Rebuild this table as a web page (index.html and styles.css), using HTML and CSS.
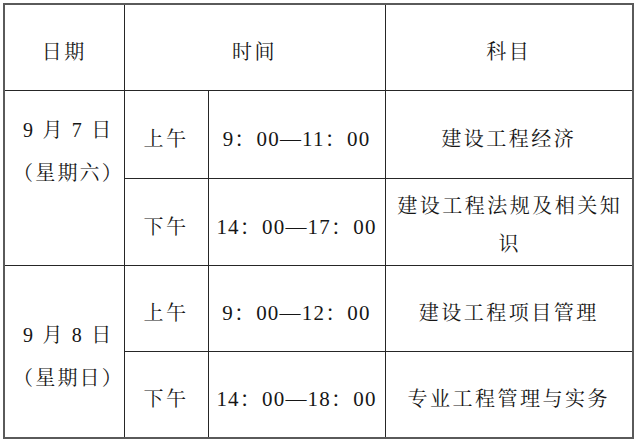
FILE: index.html
```html
<!DOCTYPE html>
<html lang="zh-CN">
<head>
<meta charset="utf-8">
<title>考试时间安排</title>
<link rel="stylesheet" href="styles.css">
</head>
<body>
<table class="schedule">
  <colgroup>
    <col class="c-date">
    <col class="c-half">
    <col class="c-time">
    <col class="c-subject">
  </colgroup>
  <tr class="r-head">
    <th>日期</th>
    <th colspan="2">时间</th>
    <th>科目</th>
  </tr>
  <tr class="r1">
    <td rowspan="2" class="date date-first">9 月 7 日<br>（星期六）</td>
    <td class="half">上午</td>
    <td class="time">9：00—11：00</td>
    <td class="subject">建设工程经济</td>
  </tr>
  <tr class="r2">
    <td class="half">下午</td>
    <td class="time">14：00—17：00</td>
    <td class="subject subject-wrap">建设工程法规及相关知识</td>
  </tr>
  <tr class="r3">
    <td rowspan="2" class="date date-second">9 月 8 日<br>（星期日）</td>
    <td class="half">上午</td>
    <td class="time">9：00—12：00</td>
    <td class="subject">建设工程项目管理</td>
  </tr>
  <tr class="r4">
    <td class="half">下午</td>
    <td class="time">14：00—18：00</td>
    <td class="subject">专业工程管理与实务</td>
  </tr>
</table>
</body>
</html>
```

FILE: styles.css
```css
html, body {
  margin: 0;
  padding: 0;
  background: #ffffff;
}

body {
  font-family: "Liberation Serif", "Noto Serif CJK SC", "Noto Sans CJK SC", serif;
  color: #161616;
}

.schedule {
  margin: 3px 0 0 3px;
  border-collapse: collapse;
  table-layout: fixed;
  width: 629px;
  border: 2px solid #5a5a5a;
}

.c-date { width: 120px; }
.c-half { width: 84px; }
.c-time { width: 177px; }
.c-subject { width: 248px; }

.schedule th,
.schedule td {
  border: 1px solid #262626;
  padding: 10px 0 0 0;
  text-align: center;
  vertical-align: middle;
  font-size: 20px;
  font-weight: normal;
  line-height: 24px;
  letter-spacing: 2.5px;
  white-space: nowrap;
}

.r-head { height: 86px; }
.r1 { height: 88px; }
.r2 { height: 87px; }
.r3 { height: 86px; }
.r4 { height: 87px; }

.schedule .date {
  vertical-align: top;
  line-height: 43px;
  letter-spacing: 2.2px;
  padding-left: 8px;
}

.schedule .date-first { padding-top: 18px; }
.schedule .date-second { padding-top: 48px; }

.schedule .time {
  font-size: 21px;
  letter-spacing: 1.2px;
}

.schedule .subject-wrap {
  white-space: normal;
  line-height: 38px;
  padding: 6px 6px 0 8px;
}
```
